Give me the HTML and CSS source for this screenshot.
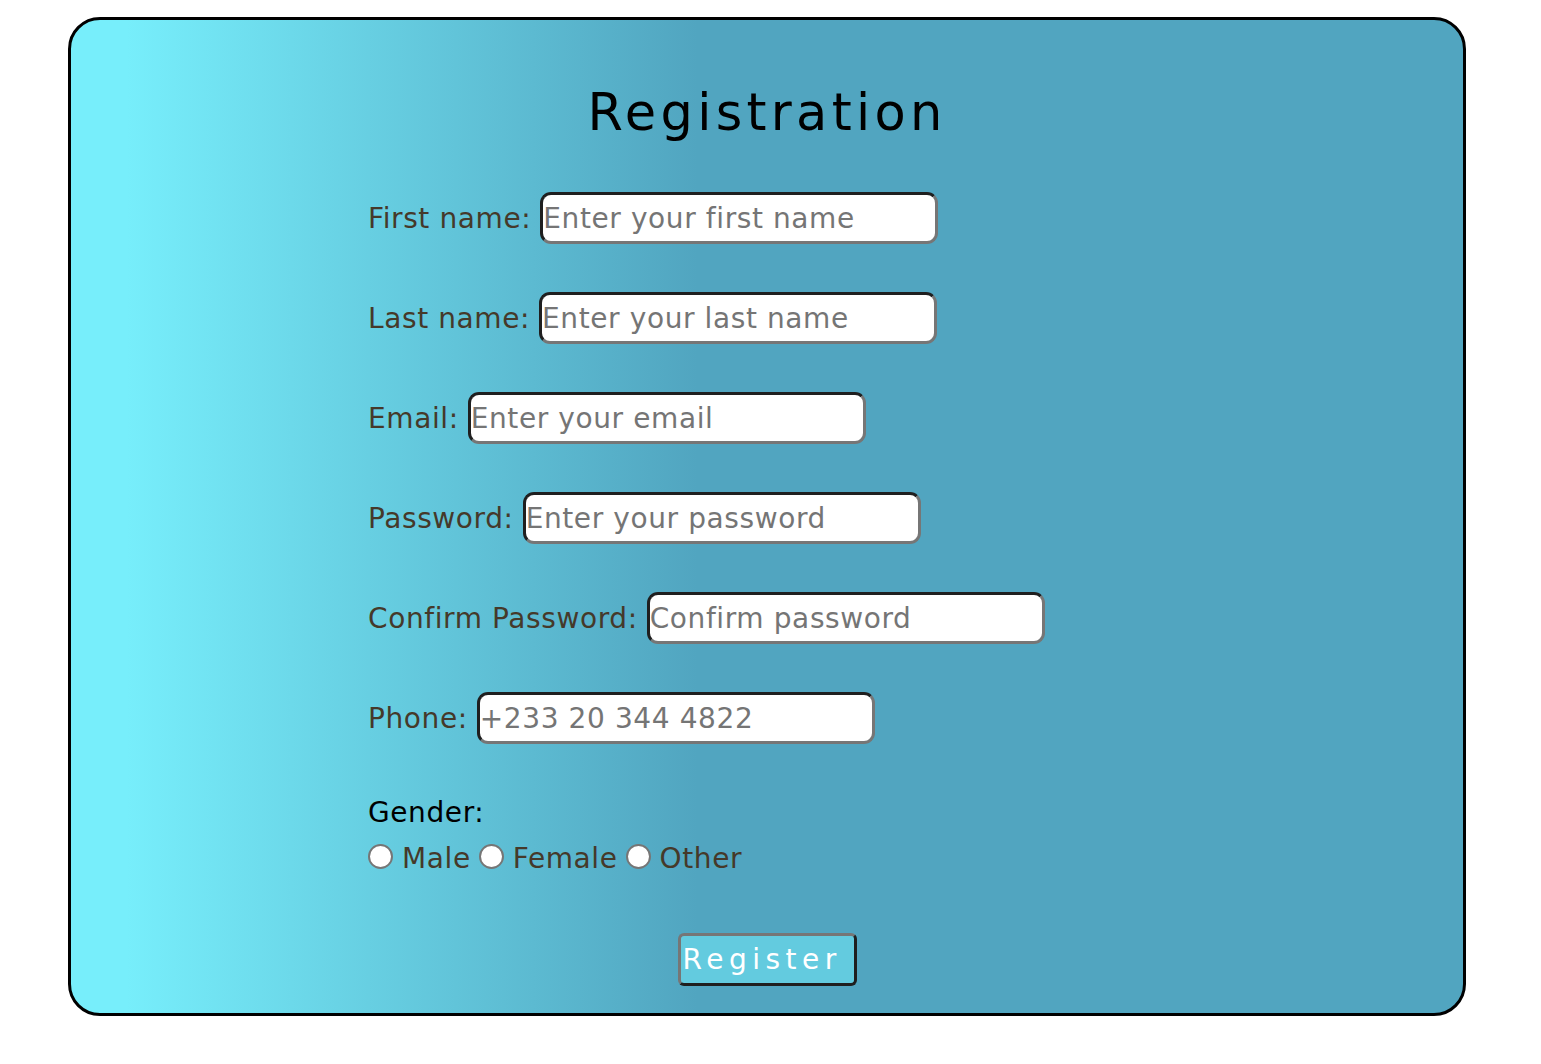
FILE: index.html
```html
<!DOCTYPE html>
<html lang="en">
<head>
<meta charset="utf-8">
<title>Registration</title>
<link rel="stylesheet" href="styles.css">
</head>
<body>
<div class="card">
  <h1 class="title">Registration</h1>
  <form class="form">
    <div class="row"><label class="label" for="fn">First name:</label><input class="field" id="fn" type="text" placeholder="Enter your first name"></div>
    <div class="row"><label class="label" for="ln">Last name:</label><input class="field" id="ln" type="text" placeholder="Enter your last name"></div>
    <div class="row"><label class="label" for="em">Email:</label><input class="field" id="em" type="email" placeholder="Enter your email"></div>
    <div class="row"><label class="label" for="pw">Password:</label><input class="field" id="pw" type="password" placeholder="Enter your password"></div>
    <div class="row"><label class="label" for="cp">Confirm Password:</label><input class="field" id="cp" type="password" placeholder="Confirm password"></div>
    <div class="row"><label class="label" for="ph">Phone:</label><input class="field" id="ph" type="tel" placeholder="+233 20 344 4822"></div>
    <div class="gender">
      <div class="gender-title">Gender:</div>
      <div class="options">
        <label class="opt"><span class="radio"></span>Male</label>
        <label class="opt"><span class="radio"></span>Female</label>
        <label class="opt"><span class="radio"></span>Other</label>
      </div>
    </div>
    <div class="actions"><button class="btn" type="button">Register</button></div>
  </form>
</div>
</body>
</html>
```
FILE: styles.css
```css
html, body {
  margin: 0;
  padding: 0;
  background: #ffffff;
}
body {
  padding: 17px 0 0 68px;
  font-family: "DejaVu Sans", "Open Sans", sans-serif;
}
.card {
  box-sizing: border-box;
  width: 1398px;
  height: 999px;
  border: 3px solid #000;
  border-radius: 32px;
  background: linear-gradient(to right, #77eefb 4%, #51a5c0 45%);
  display: flex;
  flex-direction: column;
}
.title {
  margin: 0;
  padding-top: 63px;
  height: 60px;
  line-height: 60px;
  text-align: center;
  font-size: 51px;
  font-weight: 400;
  letter-spacing: 4.3px;
  color: #000;
}
.form {
  display: flex;
  flex-direction: column;
  padding: 49px 0 0 297px;
}
.row {
  display: flex;
  align-items: center;
  height: 52px;
  margin-bottom: 48px;
}
.label {
  font-size: 28px;
  letter-spacing: 0.6px;
  color: #45392a;
  margin-right: 9px;
  white-space: nowrap;
}
.field {
  box-sizing: border-box;
  width: 398px;
  height: 52px;
  padding: 0;
  border-width: 3px;
  border-style: solid;
  border-color: #1f1f1f #767676 #767676 #1f1f1f;
  border-radius: 11px;
  background: #fff;
  font-family: inherit;
  font-size: 28px;
  letter-spacing: 0.6px;
  color: #333;
  outline: none;
}
.field::placeholder {
  color: #757575;
}
.gender {
  display: flex;
  flex-direction: column;
}
.gender-title {
  font-size: 28px;
  letter-spacing: 0.6px;
  color: #000;
  height: 40px;
  line-height: 40px;
  margin-top: 1px;
}
.options {
  display: flex;
  align-items: center;
  height: 40px;
  margin-top: 5px;
}
.opt {
  display: flex;
  align-items: center;
  font-size: 28px;
  letter-spacing: 0.6px;
  color: #45392a;
  margin-right: 8px;
}
.radio {
  box-sizing: border-box;
  width: 25px;
  height: 25px;
  border: 2px solid #767676;
  border-radius: 50%;
  background: #fff;
  margin-right: 9px;
  margin-top: -3px;
}
.actions {
  display: flex;
  justify-content: center;
  padding-right: 297px;
  margin-top: 55px;
}
.btn {
  box-sizing: border-box;
  width: 179px;
  height: 53px;
  padding: 0 0 0 2px;
  text-align: left;
  border-width: 3px;
  border-style: solid;
  border-color: #767676 #1f1f1f #1f1f1f #767676;
  border-radius: 6px;
  background: #63cbdf;
  color: #fff;
  font-family: inherit;
  font-size: 28px;
  letter-spacing: 5.5px;
  white-space: nowrap;
  overflow: hidden;
}
```
